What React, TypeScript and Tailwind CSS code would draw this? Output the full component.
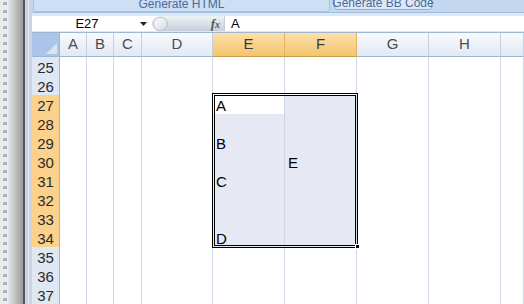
const cols = [
  { l: "A", sel: false },
  { l: "B", sel: false },
  { l: "C", sel: false },
  { l: "D", sel: false },
  { l: "E", sel: true },
  { l: "F", sel: true },
  { l: "G", sel: false },
  { l: "H", sel: false },
  { l: "", sel: false },
];

const rows = [25, 26, 27, 28, 29, 30, 31, 32, 33, 34, 35, 36, 37];

const values: Record<string, string> = {
  "27E": "A",
  "29E": "B",
  "30F": "E",
  "31E": "C",
  "34E": "D",
};

const gridCols = "grid grid-cols-[28px_27px_27px_28px_71px_72px_72px_72px_72px_23px]";

function LeftStrip() {
  return (
    <div className="flex h-full w-[32px] flex-none">
      <div className="flex w-[8px] bg-[#ececec]">
        <div className="ml-[3px] mt-[2px] w-[4px] bg-[repeating-linear-gradient(to_bottom,#a3b3ca_0_3px,transparent_3px_8px)]" />
      </div>
      <div className="w-[15px] bg-linear-to-r from-[#e6e6e6] to-[#9b9b9b]" />
      <div className="w-[2px] bg-[#555]" />
      <div className="flex w-[7px] bg-[#cbd6e4]">
        <div className="ml-[3px] w-px bg-[#e4eaf2]" />
      </div>
    </div>
  );
}

function Ribbon() {
  return (
    <>
      <div className="flex h-[12px] items-end overflow-hidden bg-[#c3d7f0]">
        <div className="ml-px flex h-[20px] w-[297px] flex-none items-end justify-center whitespace-nowrap rounded-[3px] border border-[#a6c1e4] bg-[#cddff4] pb-px text-[12px] leading-[12px] text-[#4a6a9a]">
          Generate HTML
        </div>
        <div className="mb-[2px] ml-[4px] flex h-[20px] w-[98px] flex-none items-end justify-center whitespace-nowrap rounded-[3px] border border-[#93b3dd] bg-[#dce8f7] text-[12px] leading-[12px] text-[#4a6a9a]">
          Generate BB Code
        </div>
      </div>
      <div className="h-px bg-[#9fbbe0]" />
      <div className="h-[3px] bg-[#dde8f5]" />
    </>
  );
}

function FormulaBar() {
  return (
    <>
      <div className="flex h-[15px] bg-white text-[13px] leading-[15px] text-black">
        <div className="w-[108px] flex-none pl-[2px] text-center">E27</div>
        <div className="flex w-[12px] flex-none items-center">
          <svg width="7" height="4" viewBox="0 0 7 4">
            <path d="M0 0h7L3.5 4z" fill="#222" />
          </svg>
        </div>
        <div className="flex h-[15px] w-[72px] flex-none items-center rounded-l-full bg-linear-to-b from-[#eef2f6] to-[#c6cfda]">
          <div className="ml-px h-[14px] w-[15px] rounded-full border border-[#b9c2cd] bg-linear-to-br from-white to-[#d3d9e1]" />
          <div className="ml-auto mr-[4px] font-['Liberation_Serif',serif] text-[13px] font-bold italic text-[#555]">
            f<span className="text-[10px]">x</span>
          </div>
        </div>
        <div className="w-px flex-none bg-[#c5ceda]" />
        <div className="pl-[6px]">A</div>
      </div>
      <div className="h-px bg-[#dfe7f1]" />
    </>
  );
}

function ColumnHeader() {
  return (
    <div className={`${gridCols} h-[25px] border-t border-[#9eb6ce]`}>
      <div className="relative border-r border-b border-[#9eb6ce] bg-[#aac5e9]">
        <svg className="absolute bottom-[2px] right-[2px]" width="11" height="11" viewBox="0 0 11 11">
          <path d="M11 0V11H0z" fill="#dde3ec" />
        </svg>
      </div>
      {cols.map((c, i) => (
        <div
          key={i}
          className={`flex items-center justify-center border-r border-b text-[15px] ${
            c.sel
              ? "border-[#e2b35e] border-b-[#c59c4c] bg-linear-to-b from-[#fbe0aa] to-[#f5c46c] text-[#3a3a3a]"
              : "border-[#c5d1df] border-b-[#9eb6ce] bg-linear-to-b from-[#f8fafd] to-[#e1e9f4] text-[#4d4d4d]"
          }`}
        >
          {c.l}
        </div>
      ))}
    </div>
  );
}

function Body() {
  return (
    <div className="relative">
      {rows.map((r) => {
        const rowSel = r >= 27 && r <= 34;
        return (
          <div key={r} className={`${gridCols} h-[19px]`}>
            <div
              className={`flex items-center justify-center border-r border-b border-r-[#9eb6ce] text-[15px] text-[#2b2b2b] ${
                rowSel ? "border-b-[#f0c987] bg-[#fbd18b]" : "border-b-[#c9d6e7] bg-[#dfe7f2]"
              }`}
            >
              {r}
            </div>
            {cols.map((c, i) => {
              const inSel = rowSel && c.sel;
              const active = r === 27 && c.l === "E";
              const v = values[`${r}${c.l}`];
              return (
                <div
                  key={i}
                  className={`border-r border-b border-[#d0d7e5] pl-[3px] pt-[3px] text-[15px] leading-[15px] text-black ${
                    inSel && !active ? "bg-[#e6e9f4]" : "bg-white"
                  }`}
                >
                  {v}
                </div>
              );
            })}
          </div>
        );
      })}
      <div className="absolute left-[180px] top-[36px] h-[155px] w-[146px] border-[3px] border-double border-black" />
      <div className="absolute left-[323px] top-[187px] h-[5px] w-[5px] border border-white bg-black" />
    </div>
  );
}

export default function App() {
  return (
    <div className="flex h-[304px] w-[524px] overflow-hidden bg-white font-['Liberation_Sans',Arial,sans-serif]">
      <LeftStrip />
      <div className="flex min-w-0 flex-1 flex-col">
        <Ribbon />
        <FormulaBar />
        <ColumnHeader />
        <Body />
      </div>
    </div>
  );
}
